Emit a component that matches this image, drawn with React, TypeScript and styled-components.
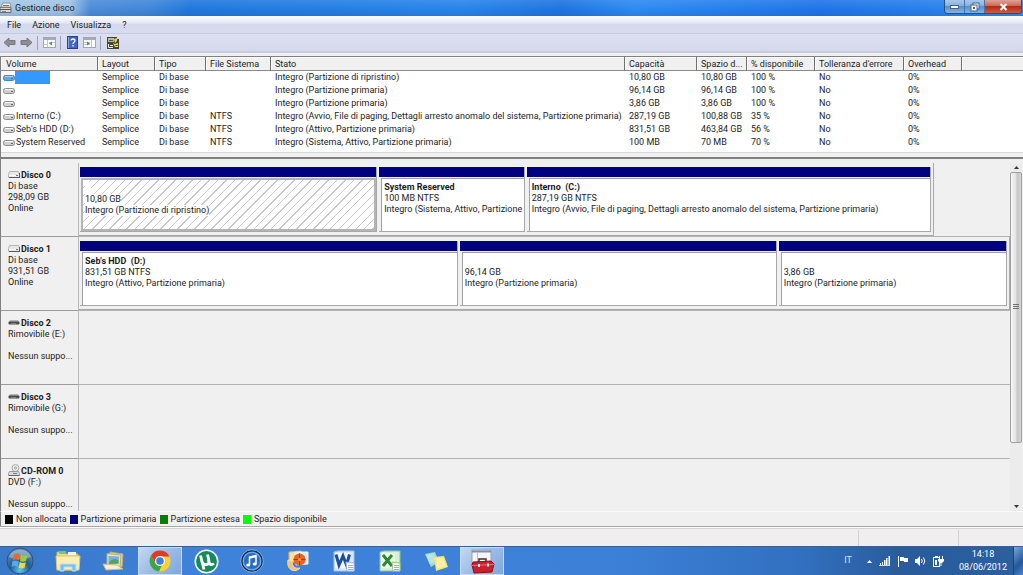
import React from "react";
import styled, { createGlobalStyle } from "styled-components";

const GlobalStyle = createGlobalStyle`
  *, *::before, *::after { box-sizing: border-box; }
  html, body { margin: 0; background: #f0f0f0; }
  body, button, table { font-family: Roboto, "Open Sans", sans-serif; font-size: 9px; color: #1c1c1c; }
  button { border: 0; padding: 0; margin: 0; background: none; }
  svg { display: block; flex: none; }
`;

const Desktop = styled.div`
  display: flex;
  flex-direction: column;
  height: 100vh;
  overflow: hidden;
`;

/* ---------- window frame ---------- */

const TitleBar = styled.header`
  flex: none;
  display: flex;
  align-items: flex-start;
  height: 16px;
  background:
    linear-gradient(rgba(255, 255, 255, 0.1), transparent 60%, rgba(20, 60, 130, 0.15)),
    linear-gradient(90deg, #a4c6e4 0, #a0c4e6 70px, #4c8cd8 90px, #4086d8 150px, #1f78dc 190px, #2884ea 45%, #1e74e0 55%, #2c8af2 62%, #1e74e8 80%, #2e8aee 100%);
`;

const TitleIcon = styled.span`
  padding: 2px 3px 0 0;
`;

const Title = styled.h1`
  flex: 1;
  margin: 0;
  font-size: 9px;
  font-weight: 400;
  line-height: 16px;
`;

const WindowButtons = styled.div`
  display: flex;
  margin-right: 1px;
  border: 1px solid #294f80;
  border-top: 0;
  border-radius: 0 0 4px 4px;
  overflow: hidden;
`;

const WindowButton = styled.button<{ $close?: boolean }>`
  display: flex;
  align-items: center;
  justify-content: center;
  width: ${(p) => (p.$close ? 36 : 20)}px;
  height: 13px;
  border-right: ${(p) => (p.$close ? "0" : "1px solid #4a74a8")};
  background: ${(p) =>
    p.$close
      ? "linear-gradient(#dca498, #cc6450 48%, #b02c18 50%, #cc5c44)"
      : "linear-gradient(#a8c8ea, #84aedc 48%, #5c90c8 50%, #80b4e4)"};
`;

const MenuBar = styled.nav`
  flex: none;
  display: flex;
  align-items: center;
  gap: 11px;
  height: 17px;
  padding-left: 7px;
  background: linear-gradient(#fbfcfe, #eaedf7 35%, #d4daec 50%, #d6dcee);
`;

const MenuItem = styled.button`
  line-height: 16px;
`;

const ToolBar = styled.div`
  flex: none;
  display: flex;
  align-items: center;
  height: 20px;
  padding-left: 2px;
  gap: 2px;
  border-top: 1px solid #c3cadf;
  border-bottom: 2px solid #c6cbe0;
  background: linear-gradient(#dde0f1, #d5d8ec);
`;

const ToolButton = styled.button`
  display: flex;
  align-items: center;
  justify-content: center;
  width: 15px;
  height: 15px;
`;

const ToolDivider = styled.span`
  width: 1px;
  height: 14px;
  margin: 0 2px 0 1px;
  background: #9ba3b8;
`;

/* ---------- volume list ---------- */

const VolumePane = styled.section`
  flex: none;
  margin-top: 3px;
  padding-bottom: 4px;
  border: solid #808080;
  border-width: 1px 0 2px 1px;
  background: #f0f0f0;
`;

const VolumeSheet = styled.div`
  padding-bottom: 3px;
  border-bottom: 1px solid #d8d8d8;
  background: #fff;
`;

const VolumeTable = styled.table`
  width: 100%;
  table-layout: fixed;
  border-collapse: separate;
  border-spacing: 0;
  white-space: nowrap;

  th, td {
    padding: 0 0 0 4px;
    text-align: left;
    overflow: hidden;
  }
  th {
    height: 14px;
    padding-top: 1px;
    font-weight: 400;
    line-height: 12px;
    text-overflow: ellipsis;
    background: #f0f0f0;
    border-right: 1px solid #707070;
    border-bottom: 1px solid #8a8a8a;
    box-shadow: inset 1px 1px #fff;
  }
  th:first-child { padding-left: 5px; }
  th:last-child { border-right: 0; }
  td { height: 13px; line-height: 13px; }
  td:first-child { padding-left: 2px; }
`;

const Col = styled.col<{ $w?: number }>`
  width: ${(p) => (p.$w ? `${p.$w}px` : "auto")};
`;

const VolumeName = styled.span<{ $selected?: boolean }>`
  display: flex;
  align-items: center;
  gap: 1px;
  height: 13px;
  &::after {
    content: "";
    display: ${(p) => (p.$selected ? "block" : "none")};
    width: 35px;
    height: 13px;
    margin-left: -1px;
    background: #3399ff;
  }
`;

/* ---------- disk map ---------- */

const DiskPane = styled.section`
  flex: 1;
  min-height: 0;
  display: flex;
  padding-top: 4px;
  border-left: 1px solid #808080;
`;

const DiskList = styled.div`
  flex: 1;
  min-width: 0;
  overflow: hidden;
`;

const DiskRow = styled.article`
  display: flex;
  height: 74px;
`;

const DiskLabel = styled.div`
  flex: none;
  width: 78px;
  padding: 6px 0 0 7px;
  border-right: 1px solid #b8b8b8;
  border-bottom: 1px solid #9c9c9c;
  line-height: 11px;
  white-space: nowrap;
`;

const DiskName = styled.h2`
  display: flex;
  align-items: center;
  gap: 1px;
  height: 12px;
  margin: 0;
  font-size: 9px;
  font-weight: 700;
  line-height: 12px;
`;

const Line = styled.p`
  min-height: 11px;
  margin: 0;
`;

const DiskGraph = styled.div`
  flex: 1;
  min-width: 0;
  border-bottom: 1px solid #b4b4b4;
`;

const Track = styled.div<{ $width: string }>`
  display: flex;
  gap: 2px;
  width: ${(p) => p.$width};
  height: 73px;
  padding: 4px 2px 3px 1px;
  border-right: 1px solid #a8a8a8;
  border-bottom: 1px solid #a8a8a8;
`;

const PartitionBox = styled.div<{ $weight: number }>`
  flex: ${(p) => p.$weight} 1 0;
  min-width: 0;
  display: flex;
  flex-direction: column;
  border-right: 1px solid #a8a8a8;
  border-bottom: 1px solid #a8a8a8;
`;

const Stripe = styled.div`
  flex: none;
  height: 10px;
  margin-bottom: 1px;
  background: #000080;
`;

const PartitionBody = styled.div<{ $hatched?: boolean }>`
  flex: 1;
  margin-left: ${(p) => (p.$hatched ? 1 : 2)}px;
  padding: 2px;
  border: ${(p) => (p.$hatched ? "2px solid #b4b4b4" : "solid #a0a0a0")};
  border-width: ${(p) => (p.$hatched ? "2px" : "1px 0 0 1px")};
  overflow: hidden;
  line-height: 11px;
  white-space: nowrap;
  background: ${(p) =>
    p.$hatched
      ? "repeating-linear-gradient(135deg, #fff 0 5px, #c8c8c8 5px 6px)"
      : "#fff"};
  & > * { width: fit-content; background: #fff; }
`;

const PartitionName = styled.h3`
  min-width: 6px;
  height: 12px;
  margin: 0;
  font-size: 9px;
  font-weight: 700;
  line-height: 12px;
  white-space: pre;
`;

const ScrollBar = styled.div`
  flex: none;
  display: flex;
  flex-direction: column;
  width: 12px;
  margin-right: 1px;
  background: #ececec;
`;

const ScrollButton = styled.button`
  display: flex;
  align-items: center;
  justify-content: center;
  height: 9px;
`;

const ScrollTrack = styled.div`
  flex: 1;
`;

const ScrollThumb = styled.div`
  display: flex;
  align-items: center;
  justify-content: center;
  height: 82%;
  border: 1px solid #a0a0a0;
  border-radius: 2px;
  background: linear-gradient(90deg, #f6f6f6, #e2e2e2 50%, #c6c6c8 60%, #d6d6d8);
`;

const Legend = styled.footer`
  flex: none;
  display: flex;
  align-items: center;
  gap: 3px;
  height: 15px;
  padding-left: 4px;
  border-left: 1px solid #808080;
  border-top: 1px solid #fafafa;
`;

const LegendItem = styled.span`
  display: flex;
  align-items: center;
  gap: 3px;
`;

const Swatch = styled.i<{ $color: string }>`
  width: 8px;
  height: 9px;
  background: ${(p) => p.$color};
`;

const StatusBar = styled.div`
  flex: none;
  display: flex;
  justify-content: flex-end;
  height: 20px;
  border-top: 1px solid #a6a6a6;
  background: #f0eeee;
  box-shadow: inset 0 1px #fdfdfd, inset 0 2px #d4d4d4;
`;

const StatusCell = styled.span<{ $w: number }>`
  width: ${(p) => p.$w}px;
  margin-top: 3px;
  border-left: 1px solid #d2d0d0;
`;

/* ---------- taskbar ---------- */

const TaskBar = styled.footer`
  flex: none;
  display: flex;
  align-items: stretch;
  height: 29px;
  border-top: 1px solid #3a5f90;
  background: linear-gradient(90deg, #3a78c8 0%, #3f82da 20%, #3c80d8 60%, #3270c0 78%, #2a5c9c 88%, #2b5f9f 100%);
`;

const StartButton = styled.button`
  display: flex;
  align-items: center;
  justify-content: center;
  width: 40px;
  margin-right: 6px;
`;

const TaskButton = styled.button<{ $active?: boolean }>`
  display: flex;
  align-items: center;
  justify-content: center;
  width: 44px;
  margin-right: 2px;
  border: 1px solid ${(p) => (p.$active ? "#c6daf2" : "transparent")};
  background: ${(p) =>
    p.$active ? "linear-gradient(135deg, #c4d8f0, #9cbce6 50%, #7ea8de)" : "none"};
`;

const Tray = styled.div`
  display: flex;
  align-items: center;
  gap: 7px;
  margin-left: auto;
  color: #fff;
`;

const Language = styled.span`
  margin-right: 8px;
  padding-bottom: 3px;
  color: #d6e4f6;
`;

const Clock = styled.time`
  width: 60px;
  margin-left: 2px;
  text-align: center;
  line-height: 13px;
`;

const ShowDesktop = styled.button`
  align-self: stretch;
  width: 10px;
  margin-left: -7px;
  border-left: 1px solid #1c4478;
  background: linear-gradient(135deg, #7aa6dc, #24579c 60%, #4c86cc);
`;

/* ---------- drawings ---------- */

const DriveIcon = ({ selected }: { selected?: boolean }) => (
  <svg width="12" height="8" viewBox="0 0 12 8">
    <rect x="0.5" y="1.5" width="11" height="5" rx="2" fill={selected ? "#5fa8e8" : "#d0d0d0"} stroke={selected ? "#3c84cc" : "#8c8c8c"} />
    <path d="M2 2.5h8" stroke={selected ? "#a8d4fa" : "#fafafa"} />
    <path d="M8 4.5h2" stroke={selected ? "#2f78c8" : "#5c6c5c"} />
  </svg>
);

const DiskIcon = () => (
  <svg width="12" height="8" viewBox="0 0 12 8">
    <path d="M1.5 0.5h9l1 3v3h-11v-3z" fill="#e8e8e8" stroke="#b4b4b4" />
    <path d="M1 6.5h10.5M11.5 2v5" stroke="#5a5a5a" />
    <path d="M1 4.5h7" stroke="#fafafa" />
    <path d="M8 4.5h2" stroke="#3c9a3c" />
  </svg>
);

const RemovableIcon = () => (
  <svg width="12" height="8" viewBox="0 0 12 8">
    <path d="M2 1h8l1.500 2.500H.5z" fill="#b4b4b4" />
    <rect x="0.500" y="2.500" width="11" height="3" rx="1" fill="#4c4c4c" />
    <path d="M3 4.500h5" stroke="#808080" />
  </svg>
);

const CdIcon = () => (
  <svg width="12" height="14" viewBox="0 0 12 14">
    <circle cx="7.500" cy="4" r="3.500" fill="#ececec" stroke="#aaa" />
    <circle cx="7.500" cy="4" r="1" fill="#fff" stroke="#999" />
    <path d="M1.500 7.500h9l1 2v2h-11v-2z" fill="#dcdcdc" stroke="#999" />
    <path d="M1 11.500h10.500" stroke="#666" />
    <path d="M5 9.500h4" stroke="#777" />
  </svg>
);

const AppIcon = () => (
  <svg width="12" height="12" viewBox="0 0 12 12">
    <path d="M0 5.500h11v5H0z" fill="#d8d8d8" stroke="#6c6c6c" />
    <path d="M1 5l2-4h7l1 4z" fill="#f0f0f0" stroke="#909090" />
    <path d="M0 7.500h11" stroke="#555" />
    <path d="M2 9.500h4" stroke="#888" />
    <path d="M3 3.500h6" stroke="#777" />
  </svg>
);

const ArrowIcon = ({ right }: { right?: boolean }) => (
  <svg width="13" height="11" viewBox="0 0 13 11">
    <path
      d={right ? "M12 5.500L7 1v2.500H1v4h6V10z" : "M1 5.500L6 1v2.500h6v4H6V10z"}
      fill="#8e8e92"
      stroke="#77777c"
      strokeLinejoin="round"
    />
  </svg>
);

const PanelIcon = ({ right }: { right?: boolean }) => (
  <svg width="13" height="11" viewBox="0 0 13 11">
    <rect x="0.500" y="0.500" width="12" height="10" fill="#fbfbfb" stroke="#a0a6b4" />
    <rect x="1" y="1" width="11" height="2" fill="#a4acba" />
    <path d={right ? "M8.500 3v7M1 5.500h6M1 7.500h6" : "M4.500 3v7M6 5.500h6M1 7.500h3"} stroke="#c0c6d2" />
    <path d={right ? "M4 4.500l3 2-3 2z" : "M9 4.500l-3 2 3 2z"} fill="#3fa04a" />
  </svg>
);

const HelpIcon = () => (
  <svg width="11" height="13" viewBox="0 0 11 13">
    <rect x="0.500" y="0.500" width="10" height="12" fill="#3f66c4" stroke="#2a3f94" />
    <path d="M1.500 1v11" stroke="#8ea8e8" />
    <path d="M4 4.500c0-2 4-2 4 0 0 1.500-2 1.500-2 3.500M6 9v1.500" fill="none" stroke="#fff" strokeWidth="1.300" />
  </svg>
);

const SettingsIcon = () => (
  <svg width="12" height="12" viewBox="0 0 12 12">
    <path d="M0 0h10v2h2v10H0z" fill="#45463a" />
    <path d="M1 1h6v4H1z" fill="#b8b8a4" />
    <path d="M2 3.500h4" stroke="#55564a" />
    <path d="M7 2l3-1v3l-2 2zM6 6l2 1 3-1v4H8z" fill="#e4d84c" />
    <path d="M1.500 7v3.500H6M3 8.500h3" fill="none" stroke="#f0f0dc" />
    <path d="M8.500 8.500h2" stroke="#33342a" />
  </svg>
);

const StartOrb = () => (
  <svg width="28" height="28" viewBox="0 0 28 28">
    <defs>
      <radialGradient id="orb" cx="50%" cy="85%" r="75%">
        <stop offset="0" stopColor="#5cc8f0" />
        <stop offset="0.500" stopColor="#1f5c94" />
        <stop offset="1" stopColor="#5f8cb4" />
      </radialGradient>
    </defs>
    <circle cx="14" cy="14" r="13" fill="url(#orb)" stroke="#2a5078" />
    <path d="M3 10a12 12 0 0 1 22 0c-6 3-16 3-22 0z" fill="#fff" opacity="0.300" />
    <path d="M8 7.500c2-1.300 4-1.300 6 0l-1 6c-2-1.200-4-1.200-6.500 0z" fill="#f0642c" />
    <path d="M15 7.800c2 1.200 4 1.200 6.500.2l-1.500 6c-2 1-4 1-6 0z" fill="#9ccc3c" />
    <path d="M6.300 14.500c2-1.200 4-1.200 6.500 0l-1.300 5.500c-2-1.200-4-1.200-6 0z" fill="#58a8ec" />
    <path d="M13.800 15c2 1.200 4 1.200 6 .2l-1.300 5.600c-2 1-4 1-6 0z" fill="#fcd43c" />
  </svg>
);

const ExplorerIcon = () => (
  <svg width="26" height="24" viewBox="0 0 26 24">
    <path d="M2 3h8l1 2h12v16H2z" fill="#efd98a" stroke="#d0b45c" />
    <path d="M4 2h7v3H4z" fill="#7cc47c" />
    <path d="M13 3h8v3h-8z" fill="#f8f4dc" />
    <path d="M1 7h24l-1 14H2z" fill="#fbeeb0" stroke="#dcc470" />
    <path d="M5 22v-7h16v7h-4v-4H9v4z" fill="#7cc0ec" stroke="#b8e0f8" />
  </svg>
);

const MailIcon = () => (
  <svg width="24" height="22" viewBox="0 0 24 22">
    <path d="M8 2l13 2-1 13-13-2z" fill="#f0d89c" stroke="#c8a860" />
    <path d="M5 3.500l14 1.500-1 12-13-1z" fill="#e4e4b4" stroke="#a8b080" />
    <path d="M6.500 6l10.500.5-.5 7-10 .5z" fill="#74b4dc" />
    <path d="M7 12q5-5 9.500-1.500v3l-9 .5z" fill="#58a060" />
    <path d="M1 14l14 1 6 4-17 1z" fill="#f8efd0" stroke="#d0b878" />
  </svg>
);

const ChromeIcon = () => (
  <svg width="22" height="22" viewBox="0 0 22 22">
    <circle cx="11" cy="11" r="10.500" fill="#fcd030" />
    <path d="M1.900 5.800A10.500 10.500 0 0 1 20.500 6.500H11a4.800 4.800 0 0 0-4.500 6.500z" fill="#dc3c2c" />
    <path d="M1.900 5.800l4.900 7.600a4.800 4.800 0 0 0 6 2L10 21.500A10.500 10.500 0 0 1 1.900 5.800z" fill="#3ca44c" />
    <circle cx="11" cy="11" r="5" fill="#fff" />
    <circle cx="11" cy="11" r="3.800" fill="#4080dc" />
  </svg>
);

const TorrentIcon = () => (
  <svg width="25" height="25" viewBox="0 0 25 25">
    <circle cx="12.500" cy="12.500" r="12" fill="#fff" />
    <circle cx="12.500" cy="12.500" r="10.500" fill="#168a5c" />
    <path d="M6.500 6.500L10 20.500M7.500 11c1 6 7.500 6 7.500 1.500L13.500 5.500M14.500 11c.5 5 3 5.500 5.500 3.500" fill="none" stroke="#fff" strokeWidth="2.800" />
  </svg>
);

const MusicIcon = () => (
  <svg width="24" height="24" viewBox="0 0 24 24">
    <circle cx="12" cy="12" r="11.300" fill="#18243c" stroke="#8cb4e0" />
    <circle cx="12" cy="12" r="8.800" fill="#2c6cc0" stroke="#5cb0f4" strokeWidth="1.500" />
    <path d="M9.500 16V8l6.500-1.500V15" fill="none" stroke="#fff" strokeWidth="1.500" />
    <path d="M9.500 8.800l6.500-1.500" stroke="#fff" strokeWidth="2" />
    <ellipse cx="8.200" cy="16" rx="2" ry="1.600" fill="#fff" />
    <ellipse cx="14.700" cy="15" rx="2" ry="1.600" fill="#fff" />
  </svg>
);

const MediaIcon = () => (
  <svg width="24" height="24" viewBox="0 0 24 24">
    <path d="M3 3l12-1v11H3z" fill="#f6e0a8" stroke="#e0b060" />
    <path d="M9 3h13v12l-12 1z" fill="#dcecf0" stroke="#f6f0e0" />
    <circle cx="13.500" cy="10.500" r="6" fill="#e86420" />
    <path d="M13.500 4.500v12M7.500 10.500h12" stroke="#b83410" />
    <circle cx="13.500" cy="10.500" r="1.500" fill="#f8a040" />
    <path d="M2 11c-2 11 8 13 12 8-5 1-8-1-8-7z" fill="#f8c070" stroke="#fae0a0" />
  </svg>
);

const OfficeIcon = ({ kind }: { kind: "word" | "excel" }) => {
  const word = kind === "word";
  const dark = word ? "#1c4fa0" : "#2c8a34";
  return (
    <svg width="22" height="23" viewBox="0 0 22 23">
      <path d="M1 2L5 1h16v20H1z" fill={word ? "#dce8f8" : "#d8f0d4"} stroke={word ? "#a8c0e4" : "#90c488"} />
      <path d="M2 3h14v15H2z" fill={word ? "#f4f8fe" : "#eefaea"} />
      <path
        d={word ? "M3 4.500L6 15L10 6l3.500 9L16.500 4.500" : "M4 5l9 11M13 5L4 16"}
        fill="none"
        stroke={dark}
        strokeWidth="3"
      />
      <path d="M13 12l8 1v8h-7z" fill="#fff" stroke={word ? "#9cb4dc" : "#90c488"} />
      <path d="M15 15.500h5M15 17.500h5M15 19.500h5" stroke={word ? "#9cb4dc" : "#8cc488"} />
    </svg>
  );
};

const NotesIcon = () => (
  <svg width="25" height="21" viewBox="0 0 25 21">
    <path d="M1 3l10-2 4 10-8 5z" fill="#a4d8c0" />
    <path d="M2 3.500l8-1 2 8-6 3z" fill="#bce4dc" />
    <path d="M10 6l10-1 4 11-12 4z" fill="#f4e47c" />
    <path d="M12 7l7-1 3 9-9 3z" fill="#fbf0a0" />
  </svg>
);

const ToolboxIcon = () => (
  <svg width="25" height="25" viewBox="0 0 25 25">
    <rect x="2" y="1" width="19" height="14" fill="#f6f6f8" stroke="#98a0b0" />
    <path d="M2 2.500h19" stroke="#7890b8" strokeWidth="2" />
    <path d="M7.500 4v9" stroke="#b4bccc" />
    <path d="M9 13v-3h7v3" fill="none" stroke="#333" strokeWidth="1.500" />
    <path d="M3 13l18-1 3 3-2 8-18 1-2-8z" fill="#c8202c" stroke="#8a1018" />
    <path d="M2 16.500l22-1" stroke="#f07078" />
    <rect x="8" y="15" width="2" height="3" fill="#eee" />
    <rect x="17" y="14.500" width="2" height="3" fill="#eee" />
  </svg>
);

const SignalIcon = () => (
  <svg width="11" height="10" viewBox="0 0 11 10">
    <path d="M1 7h1v2H1zM3 6h1v3H3zM5 4h1.500v5H5zM7 2h1.500v7H7zM9.500 0H11v9H9.500z" fill="#fff" />
    <path d="M0 9.500h11" stroke="#c8d8ec" />
  </svg>
);

const FlagIcon = () => (
  <svg width="11" height="11" viewBox="0 0 11 11">
    <path d="M1.500 0v11" stroke="#fff" />
    <path d="M3 1h4v1h4v4H7V5H3z" fill="#fff" />
  </svg>
);

const SpeakerIcon = () => (
  <svg width="11" height="10" viewBox="0 0 11 10">
    <path d="M0 3h2l3-3v10L2 7H0z" fill="#fff" />
    <path d="M6.500 3q1.500 2 0 4M8.500 1.500q2.500 3.500 0 7" fill="none" stroke="#fff" />
  </svg>
);

const PowerIcon = () => (
  <svg width="11" height="12" viewBox="0 0 11 12">
    <rect x="0.500" y="2.500" width="6" height="9" fill="none" stroke="#fff" />
    <path d="M2 1h3v1H2zM2 5h2v5H2z" fill="#fff" />
    <path d="M5 4h6v2L9 8H7L5 6zM6 1h1v3H6zM9 1h1v3H9zM7.500 8h1v3h-1z" fill="#fff" />
  </svg>
);

const Triangle = ({ down, color = "#333" }: { down?: boolean; color?: string }) => (
  <svg width="5" height="3" viewBox="0 0 5 3">
    <path d={down ? "M0 0h5L2.500 3z" : "M0 3h5L2.500 0z"} fill={color} />
  </svg>
);

/* ---------- data ---------- */

const columns: [string, number?][] = [
  ["Volume", 97],
  ["Layout", 57],
  ["Tipo", 51],
  ["File Sistema", 65],
  ["Stato", 354],
  ["Capacità", 72],
  ["Spazio d...", 50],
  ["% disponibile", 68],
  ["Tolleranza d'errore", 89],
  ["Overhead", 58],
  ["", undefined],
];

const volumes = [
  ["", "", "Integro (Partizione di ripristino)", "10,80 GB", "10,80 GB", "100 %"],
  ["", "", "Integro (Partizione primaria)", "96,14 GB", "96,14 GB", "100 %"],
  ["", "", "Integro (Partizione primaria)", "3,86 GB", "3,86 GB", "100 %"],
  ["Interno (C:)", "NTFS", "Integro (Avvio, File di paging, Dettagli arresto anomalo del sistema, Partizione primaria)", "287,19 GB", "100,88 GB", "35 %"],
  ["Seb's HDD (D:)", "NTFS", "Integro (Attivo, Partizione primaria)", "831,51 GB", "463,84 GB", "56 %"],
  ["System Reserved", "NTFS", "Integro (Sistema, Attivo, Partizione primaria)", "100 MB", "70 MB", "70 %"],
];

type Partition = { name: string; size: string; status: string; weight: number; hatched?: boolean };
type Disk = { name: string; icon: React.ReactNode; lines: string[]; width?: string; parts?: Partition[] };

const disks: Disk[] = [
  {
    name: "Disco 0",
    icon: <DiskIcon />,
    lines: ["Di base", "298,09 GB", "Online"],
    width: "calc(92% - 2px)",
    parts: [
      { name: "", size: "10,80 GB", status: "Integro (Partizione di ripristino)", weight: 297, hatched: true },
      { name: "System Reserved", size: "100 MB NTFS", status: "Integro (Sistema, Attivo, Partizione", weight: 145 },
      { name: "Interno  (C:)", size: "287,19 GB NTFS", status: "Integro (Avvio, File di paging, Dettagli arresto anomalo del sistema, Partizione primaria)", weight: 404 },
    ],
  },
  {
    name: "Disco 1",
    icon: <DiskIcon />,
    lines: ["Di base", "931,51 GB", "Online"],
    width: "100%",
    parts: [
      { name: "Seb's HDD  (D:)", size: "831,51 GB NTFS", status: "Integro (Attivo, Partizione primaria)", weight: 378 },
      { name: "", size: "96,14 GB", status: "Integro (Partizione primaria)", weight: 317 },
      { name: "", size: "3,86 GB", status: "Integro (Partizione primaria)", weight: 228 },
    ],
  },
  { name: "Disco 2", icon: <RemovableIcon />, lines: ["Rimovibile (E:)", "", "Nessun suppo..."] },
  { name: "Disco 3", icon: <RemovableIcon />, lines: ["Rimovibile (G:)", "", "Nessun suppo..."] },
  { name: "CD-ROM 0", icon: <CdIcon />, lines: ["DVD (F:)", "", "Nessun suppo..."] },
];

const legend = [
  ["Non allocata", "#000000"],
  ["Partizione primaria", "#000080"],
  ["Partizione estesa", "#008000"],
  ["Spazio disponibile", "#00ff00"],
];

const tasks: { label: string; icon: React.ReactNode; active?: boolean }[] = [
  { label: "Esplora risorse", icon: <ExplorerIcon /> },
  { label: "Posta", icon: <MailIcon /> },
  { label: "Chrome", icon: <ChromeIcon />, active: true },
  { label: "Torrent", icon: <TorrentIcon /> },
  { label: "Musica", icon: <MusicIcon /> },
  { label: "Foto", icon: <MediaIcon /> },
  { label: "Word", icon: <OfficeIcon kind="word" /> },
  { label: "Excel", icon: <OfficeIcon kind="excel" /> },
  { label: "Note", icon: <NotesIcon /> },
  { label: "Gestione disco", icon: <ToolboxIcon />, active: true },
];

export default function App() {
  return (
    <Desktop>
      <GlobalStyle />
      <TitleBar>
        <TitleIcon><AppIcon /></TitleIcon>
        <Title>Gestione disco</Title>
        <WindowButtons>
          <WindowButton aria-label="Riduci a icona">
            <svg width="9" height="4" viewBox="0 0 9 4"><rect x="0.500" y="0.500" width="8" height="3" fill="#fff" stroke="#44648c" /></svg>
          </WindowButton>
          <WindowButton aria-label="Ripristina">
            <svg width="10" height="10" viewBox="0 0 10 10">
              <rect x="3" y="1" width="6" height="6" fill="#fff" stroke="#44648c" />
              <rect x="1" y="3" width="6" height="6" fill="#fff" stroke="#44648c" />
              <rect x="3" y="5" width="2" height="2" fill="#44648c" />
            </svg>
          </WindowButton>
          <WindowButton $close aria-label="Chiudi">
            <svg width="9" height="8" viewBox="0 0 9 8"><path d="M1.500 1l6 6M7.500 1l-6 6" stroke="#fff" strokeWidth="2" /></svg>
          </WindowButton>
        </WindowButtons>
      </TitleBar>
      <MenuBar>
        {["File", "Azione", "Visualizza", "?"].map((m) => <MenuItem key={m}>{m}</MenuItem>)}
      </MenuBar>
      <ToolBar>
        <ToolButton aria-label="Indietro"><ArrowIcon /></ToolButton>
        <ToolButton aria-label="Avanti"><ArrowIcon right /></ToolButton>
        <ToolDivider />
        <ToolButton aria-label="Mostra albero"><PanelIcon /></ToolButton>
        <ToolDivider />
        <ToolButton aria-label="Guida"><HelpIcon /></ToolButton>
        <ToolButton aria-label="Mostra riquadro azioni"><PanelIcon right /></ToolButton>
        <ToolDivider />
        <ToolButton aria-label="Impostazioni"><SettingsIcon /></ToolButton>
      </ToolBar>
      <VolumePane>
        <VolumeSheet>
          <VolumeTable>
            <colgroup>{columns.map(([c, w]) => <Col key={c} $w={w} />)}</colgroup>
            <thead>
              <tr>{columns.map(([c]) => <th key={c}>{c}</th>)}</tr>
            </thead>
            <tbody>
              {volumes.map(([name, fs, status, size, free, pct], i) => (
                <tr key={i}>
                  <td><VolumeName $selected={i === 0}><DriveIcon selected={i === 0} />{name}</VolumeName></td>
                  <td>Semplice</td>
                  <td>Di base</td>
                  <td>{fs}</td>
                  <td>{status}</td>
                  <td>{size}</td>
                  <td>{free}</td>
                  <td>{pct}</td>
                  <td>No</td>
                  <td>0%</td>
                  <td />
                </tr>
              ))}
            </tbody>
          </VolumeTable>
        </VolumeSheet>
      </VolumePane>
      <DiskPane>
        <DiskList>
          {disks.map((d) => (
            <DiskRow key={d.name}>
              <DiskLabel>
                <DiskName>{d.icon}{d.name}</DiskName>
                {d.lines.map((l, i) => <Line key={i}>{l}</Line>)}
              </DiskLabel>
              <DiskGraph>
                {d.parts && (
                  <Track $width={d.width ?? "100%"}>
                    {d.parts.map((p, i) => (
                      <PartitionBox key={i} $weight={p.weight}>
                        <Stripe />
                        <PartitionBody $hatched={p.hatched}>
                          <PartitionName>{p.name}</PartitionName>
                          <Line>{p.size}</Line>
                          <Line>{p.status}</Line>
                        </PartitionBody>
                      </PartitionBox>
                    ))}
                  </Track>
                )}
              </DiskGraph>
            </DiskRow>
          ))}
        </DiskList>
        <ScrollBar>
          <ScrollButton aria-label="Scorri su"><Triangle /></ScrollButton>
          <ScrollTrack>
            <ScrollThumb>
              <svg width="6" height="6" viewBox="0 0 6 6"><path d="M0 .5h6M0 2.500h6M0 4.500h6" stroke="#707070" /></svg>
            </ScrollThumb>
          </ScrollTrack>
          <ScrollButton aria-label="Scorri giù"><Triangle down /></ScrollButton>
        </ScrollBar>
      </DiskPane>
      <Legend>
        {legend.map(([t, c]) => <LegendItem key={t}><Swatch $color={c} />{t}</LegendItem>)}
      </Legend>
      <StatusBar>
        <StatusCell $w={100} />
        <StatusCell $w={65} />
      </StatusBar>
      <TaskBar>
        <StartButton aria-label="Start"><StartOrb /></StartButton>
        {tasks.map((t) => <TaskButton key={t.label} $active={t.active} aria-label={t.label}>{t.icon}</TaskButton>)}
        <Tray>
          <Language>IT</Language>
          <Triangle color="#fff" />
          <SignalIcon />
          <FlagIcon />
          <SpeakerIcon />
          <PowerIcon />
          <Clock>14:18<br />08/06/2012</Clock>
          <ShowDesktop aria-label="Mostra desktop" />
        </Tray>
      </TaskBar>
    </Desktop>
  );
}
